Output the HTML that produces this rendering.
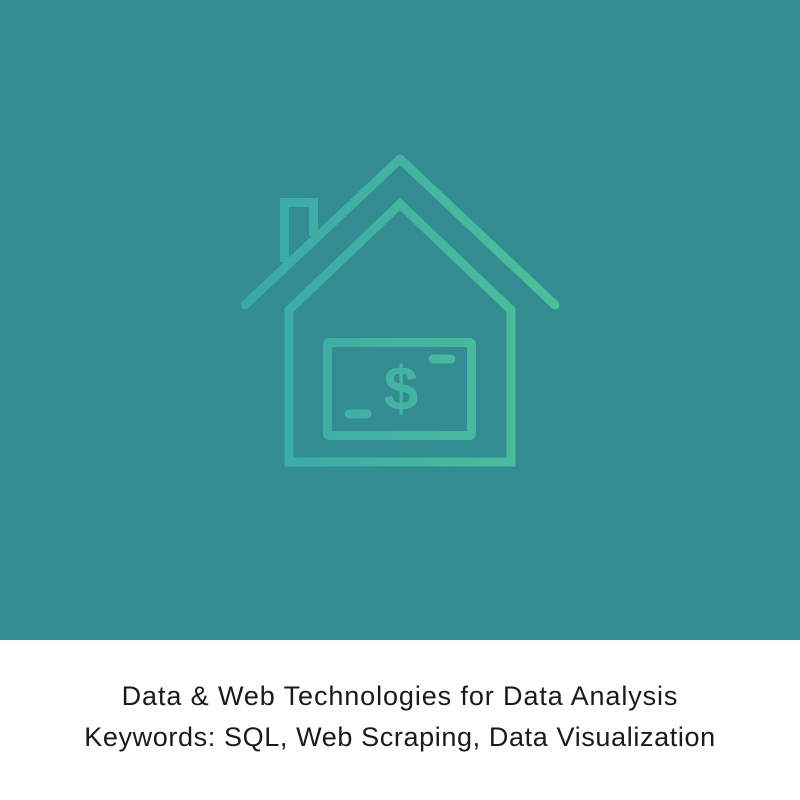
<!DOCTYPE html>
<html><head><style>
body{margin:0;width:800px;height:800px;overflow:hidden;background:#fff;font-family:"Liberation Sans",sans-serif}
.top{position:absolute;left:0;top:0;width:800px;height:640px;background:#328c92}
.t{position:absolute;left:0;width:800px;text-align:center;font-size:27px;color:#1a1a1a;letter-spacing:0.9px;white-space:nowrap}
</style></head><body>
<div class="top">
<svg width="800" height="640" viewBox="0 0 800 640">
<defs><linearGradient id="g" x1="240" x2="560" y1="0" y2="0" gradientUnits="userSpaceOnUse">
<stop offset="0" stop-color="#38a8aa"/><stop offset="1" stop-color="#4cc197"/></linearGradient></defs>
<g fill="none" stroke="url(#g)" stroke-width="9" stroke-linecap="round" stroke-linejoin="round">
<path d="M245 305 L400 159 L555 305"/>
<path d="M289 462 L289 310 L400 204 L511 310 L511 462 Z" stroke-linecap="butt" stroke-linejoin="miter"/>
<path d="M284.5 262 L284.5 202.5 L313.5 202.5 L313.5 236" stroke-linecap="butt" stroke-linejoin="miter"/>
<rect x="327.5" y="342.5" width="144" height="93" rx="2"/>
<path d="M433 359 L451 359 M349 414 L367 414"/>
</g>
<text x="401" y="410" text-anchor="middle" font-size="62" font-weight="bold" font-family="Liberation Sans,sans-serif" fill="url(#g)">$</text>
</svg>
</div>
<div class="t" style="top:681px">Data &amp; Web Technologies for Data Analysis</div>
<div class="t" style="top:722px;letter-spacing:0.62px">Keywords: SQL, Web Scraping, Data Visualization</div>
</body></html>
